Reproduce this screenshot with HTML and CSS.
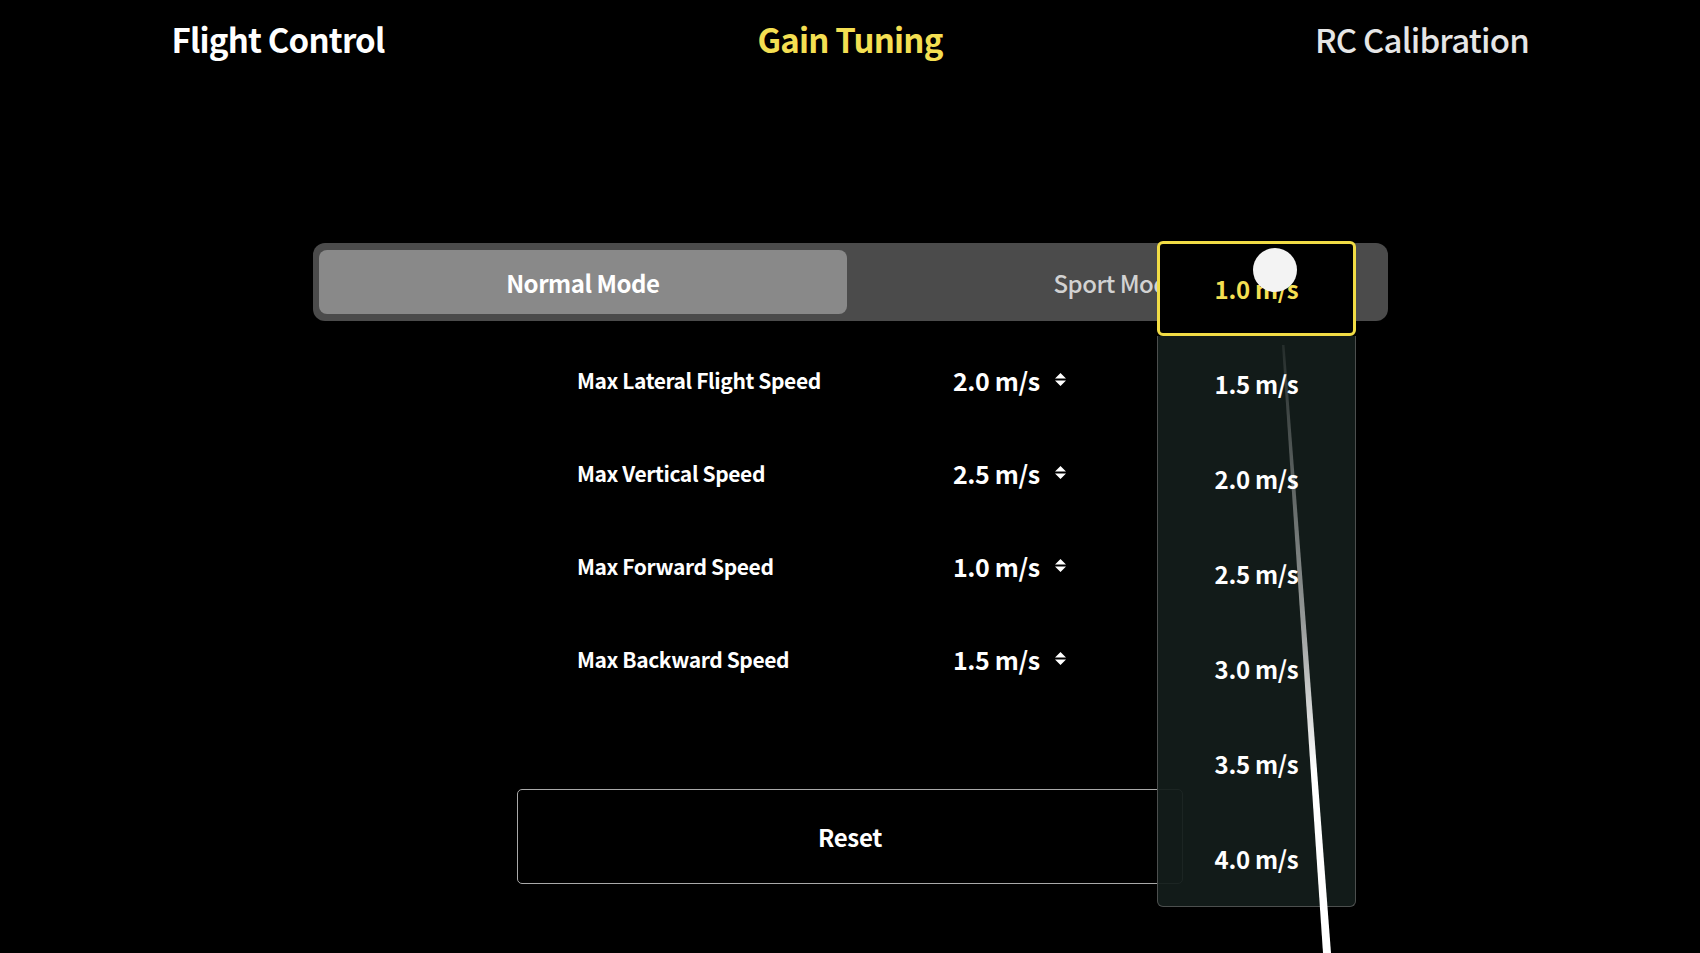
FILE: index.html
```html
<!DOCTYPE html>
<html lang="en">
<head>
<meta charset="utf-8">
<title>Gain Tuning</title>
<link rel="stylesheet" href="styles.css">
</head>
<body>
<header class="tabs">
  <div class="tab">Flight Control</div>
  <div class="tab tab-active">Gain Tuning</div>
  <div class="tab tab-dim">RC Calibration</div>
</header>

<main class="panel">
  <div class="segmented">
    <div class="seg seg-active">Normal Mode</div>
    <div class="seg">Sport Mode</div>
  </div>

  <div class="rows">
    <div class="row">
      <span class="label">Max Lateral Flight Speed</span>
      <span class="value">2.0 m/s</span>
      <svg class="updown" viewBox="0 0 11 13"><path d="M5.5 0 L11 5.5 H0 Z M0 7.5 H11 L5.5 13 Z" fill="#fff"/></svg>
    </div>
    <div class="row">
      <span class="label">Max Vertical Speed</span>
      <span class="value">2.5 m/s</span>
      <svg class="updown" viewBox="0 0 11 13"><path d="M5.5 0 L11 5.5 H0 Z M0 7.5 H11 L5.5 13 Z" fill="#fff"/></svg>
    </div>
    <div class="row">
      <span class="label">Max Forward Speed</span>
      <span class="value">1.0 m/s</span>
      <svg class="updown" viewBox="0 0 11 13"><path d="M5.5 0 L11 5.5 H0 Z M0 7.5 H11 L5.5 13 Z" fill="#fff"/></svg>
    </div>
    <div class="row">
      <span class="label">Max Backward Speed</span>
      <span class="value">1.5 m/s</span>
      <svg class="updown" viewBox="0 0 11 13"><path d="M5.5 0 L11 5.5 H0 Z M0 7.5 H11 L5.5 13 Z" fill="#fff"/></svg>
    </div>
  </div>

  <div class="reset">Reset</div>
</main>

<div class="dropdown">
  <div class="opt opt-selected">1.0 m/s</div>
  <div class="opt-list">
    <div class="opt">1.5 m/s</div>
    <div class="opt">2.0 m/s</div>
    <div class="opt">2.5 m/s</div>
    <div class="opt">3.0 m/s</div>
    <div class="opt">3.5 m/s</div>
    <div class="opt">4.0 m/s</div>
  </div>
</div>

<div class="touch"></div>

<svg class="trail" width="1700" height="953" viewBox="0 0 1700 953">
  <defs>
    <linearGradient id="tg" x1="0" y1="345" x2="0" y2="953" gradientUnits="userSpaceOnUse">
      <stop offset="0" stop-color="#fff" stop-opacity="0.08"/>
      <stop offset="0.45" stop-color="#fff" stop-opacity="0.55"/>
      <stop offset="0.7" stop-color="#fff" stop-opacity="1"/>
      <stop offset="1" stop-color="#fff" stop-opacity="1"/>
    </linearGradient>
  </defs>
  <polygon points="1282,345 1284.5,345 1331,953 1323,953" fill="url(#tg)"/>
</svg>
</body>
</html>
```

FILE: styles.css
```css
html, body {
  margin: 0;
  padding: 0;
  background: #000;
  width: 1700px;
  height: 953px;
  overflow: hidden;
}

body {
  position: relative;
  color: #fff;
  font-family: "Noto Sans CJK SC", "Noto Sans", sans-serif;
  font-weight: 700;
}

.tabs {
  display: grid;
  grid-template-columns: repeat(3, 572px);
  justify-content: center;
  height: 78px;
  align-items: center;
}

.tab {
  text-align: center;
  font-size: 33px;
  letter-spacing: -0.8px;
  line-height: 40px;
  color: #fff;
  font-weight: 600;
}

.tab-active {
  color: #f4df52;
}

.tab-dim {
  color: #e6e6e6;
  font-weight: 500;
}

.panel {
  display: flex;
  flex-direction: column;
  align-items: center;
}

.segmented {
  margin-top: 165px;
  width: 1075px;
  height: 78px;
  box-sizing: border-box;
  padding: 7px 6px;
  background: #4b4b4b;
  border-radius: 12px;
  display: flex;
  gap: 6px;
}

.seg {
  flex: 1;
  display: flex;
  align-items: center;
  justify-content: center;
  font-size: 24px;
  letter-spacing: -0.5px;
  color: #d2d2d2;
  font-weight: 500;
  border-radius: 8px;
}

.seg-active {
  background: #898989;
  color: #fff;
  font-weight: 700;
}

.rows {
  width: 666px;
  box-sizing: border-box;
  padding-left: 60px;
  margin-top: 12px;
  display: flex;
  flex-direction: column;
}

.row {
  height: 93px;
  display: flex;
  align-items: center;
}

.label {
  width: 376px;
  font-size: 21px;
  letter-spacing: -0.4px;
}

.value {
  font-size: 25px;
  letter-spacing: -0.4px;
  font-weight: 600;
}

.updown {
  width: 11px;
  height: 13px;
  margin-left: 15px;
}

.reset {
  margin-top: 84px;
  width: 666px;
  height: 95px;
  box-sizing: border-box;
  border: 1.5px solid #a9a9a9;
  border-radius: 5px;
  display: flex;
  align-items: center;
  justify-content: center;
  font-size: 24px;
  letter-spacing: -0.3px;
  font-weight: 600;
}

.dropdown {
  position: absolute;
  left: 1157px;
  top: 241px;
  width: 199px;
  display: flex;
  flex-direction: column;
}

.opt {
  height: 95px;
  display: flex;
  align-items: center;
  justify-content: center;
  font-size: 24px;
  letter-spacing: -0.3px;
  font-weight: 600;
  color: #fff;
}

.opt-selected {
  box-sizing: border-box;
  background: #000;
  border: 3px solid #f1dc45;
  border-radius: 6px;
  color: #f4df52;
}

.opt-list {
  background: rgba(19, 29, 27, 0.94);
  border: 1px solid #4c4f4e;
  border-top: none;
  border-radius: 0 0 6px 6px;
}

.touch {
  position: absolute;
  left: 1253px;
  top: 248px;
  width: 44px;
  height: 44px;
  border-radius: 50%;
  background: #f3f3f3;
}

.trail {
  position: absolute;
  left: 0;
  top: 0;
  pointer-events: none;
}
```
